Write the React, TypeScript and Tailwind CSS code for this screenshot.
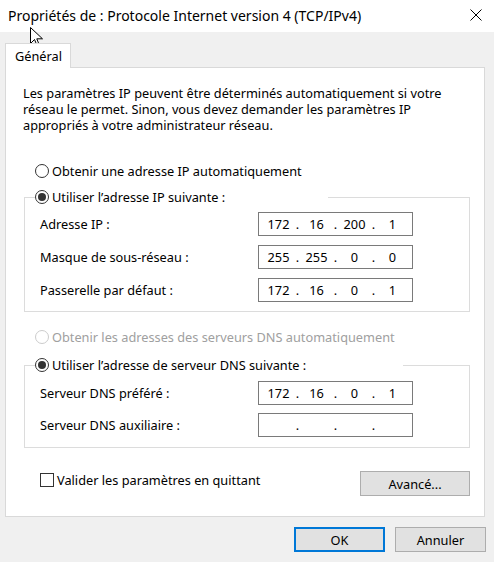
import React from "react";

function Radio({ checked, disabled }: { checked?: boolean; disabled?: boolean }) {
  return (
    <span
      className={`w-[14px] h-[14px] rounded-full border bg-white flex items-center justify-center shrink-0 ${
        disabled ? "border-[#cccccc]" : "border-[#333333]"
      }`}
    >
      {checked && <span className="w-[8px] h-[8px] rounded-full bg-[#333333]" />}
    </span>
  );
}

function IpInput({ parts }: { parts: string[] }) {
  return (
    <div className="w-[155px] h-[24px] border border-[#7a7a7a] bg-white flex items-center justify-center leading-none">
      {parts.map((p, i) => (
        <React.Fragment key={i}>
          {i > 0 && <span className="w-[8px] text-center">.</span>}
          <span className="w-[30px] text-center">{p}</span>
        </React.Fragment>
      ))}
    </div>
  );
}

function Row({ label, parts }: { label: string; parts: string[] }) {
  return (
    <div className="flex items-center h-[24px]">
      <span className="w-[218px]">{label}</span>
      <IpInput parts={parts} />
    </div>
  );
}

export default function App() {
  return (
    <div className="relative w-[494px] h-[562px] bg-[#f0f0f0] text-black text-[12.75px] leading-[16px] font-['Noto_Sans',sans-serif] overflow-hidden">
      {/* Title bar */}
      <div className="h-[32px] bg-white flex items-center justify-between pl-[8px] pr-[12px]">
        <span className="text-[14px]">Propriétés de : Protocole Internet version 4 (TCP/IPv4)</span>
        <svg width="12" height="12" viewBox="0 0 12 12" className="mt-[-2px]">
          <path d="M0.5 0.5 L11.5 11.5 M11.5 0.5 L0.5 11.5" stroke="#000" strokeWidth="1" fill="none" />
        </svg>
      </div>

      <div className="pt-[11px] pl-[5px]">
        {/* Tab */}
        <div className="relative z-10 w-[66px] h-[25px] bg-white border border-b-0 border-[#d9d9d9] flex items-center pl-[9px]">
          Général
        </div>
        {/* Panel */}
        <div className="-mt-px w-[480px] h-[450px] bg-white border border-[#d9d9d9] pl-[17px] pt-[17px]">
          <p className="leading-[16px]">
            Les paramètres IP peuvent être déterminés automatiquement si votre
            <br />
            réseau le permet. Sinon, vous devez demander les paramètres IP
            <br />
            appropriés à votre administrateur réseau.
          </p>

          <div className="mt-[30px] ml-[12px] flex items-center gap-[3px] h-[16px]">
            <Radio />
            <span>Obtenir une adresse IP automatiquement</span>
          </div>

          <fieldset className="mt-[10px] ml-[1px] w-[446px] border border-[#dcdcdc] pb-[9px]">
            <legend className="ml-[10px] w-[293px] h-[16px] flex items-center gap-[3px]">
              <Radio checked />
              <span>Utiliser l’adresse IP suivante :</span>
            </legend>
            <div className="mt-[7px] pl-[15px] flex flex-col gap-[9px]">
              <Row label="Adresse IP :" parts={["172", "16", "200", "1"]} />
              <Row label="Masque de sous-réseau :" parts={["255", "255", "0", "0"]} />
              <Row label="Passerelle par défaut :" parts={["172", "16", "0", "1"]} />
            </div>
          </fieldset>

          <div className="mt-[17px] ml-[12px] flex items-center gap-[3px] h-[16px] text-[#a0a0a0]">
            <Radio disabled />
            <span>Obtenir les adresses des serveurs DNS automatiquement</span>
          </div>

          <fieldset className="mt-[12px] ml-[1px] w-[446px] border border-[#dcdcdc] pb-[10px]">
            <legend className="ml-[10px] w-[368px] h-[16px] flex items-center gap-[3px]">
              <Radio checked />
              <span>Utiliser l’adresse de serveur DNS suivante :</span>
            </legend>
            <div className="mt-[8px] pl-[15px] flex flex-col gap-[8px]">
              <Row label="Serveur DNS préféré :" parts={["172", "16", "0", "1"]} />
              <Row label="Serveur DNS auxiliaire :" parts={["", "", "", ""]} />
            </div>
          </fieldset>

          <div className="mt-[23px] ml-[17px] w-[430px] flex items-start justify-between">
            <div className="mt-[1px] flex items-center gap-[3px] h-[16px]">
              <span className="w-[14px] h-[14px] border border-[#333333] bg-white shrink-0" />
              <span>Valider les paramètres en quittant</span>
            </div>
            <button className="w-[110px] h-[25px] bg-[#e1e1e1] border border-[#adadad] flex items-center justify-center">
              Avancé...
            </button>
          </div>
        </div>
      </div>

      <div className="mt-[10px] pr-[8px] flex justify-end gap-[10px]">
        <button className="w-[91px] h-[25px] bg-[#e1e1e1] border-2 border-[#0078d7] flex items-center justify-center">
          OK
        </button>
        <button className="w-[91px] h-[25px] bg-[#e1e1e1] border border-[#adadad] flex items-center justify-center">
          Annuler
        </button>
      </div>

      {/* Mouse cursor */}
      <svg className="absolute left-[30px] top-[27px]" width="14" height="22" viewBox="0 0 14 22">
        <path
          d="M0.5 0.5 L0.5 16.5 L4.5 12.5 L7.5 19.5 L9.5 18.5 L6.8 11.8 L12.5 11.8 Z"
          fill="#fff"
          stroke="#000"
          strokeWidth="1"
          strokeLinejoin="miter"
        />
      </svg>
    </div>
  );
}
